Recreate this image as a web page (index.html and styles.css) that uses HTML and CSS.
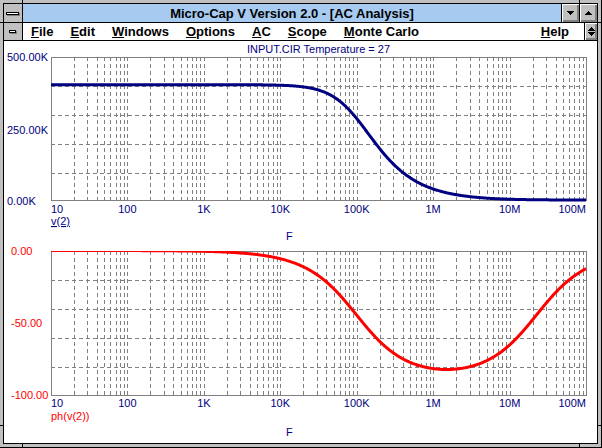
FILE: index.html
```html
<!DOCTYPE html>
<html lang="en">
<head>
<meta charset="utf-8">
<title>Micro-Cap V Version 2.0 - [AC Analysis]</title>
<link rel="stylesheet" href="styles.css">
</head>
<body>
<div class="window">
  <div class="frame">
    <div class="titlebar">
      <div class="sysbox"><span class="sysbar"></span></div>
      <div class="caption">Micro-Cap V Version 2.0 - [AC Analysis]</div>
      <div class="btn"><svg class="glyph" width="7" height="4" viewBox="0 0 7 4"><path d="M0 0H7V1H6V2H5V3H4V4H3V3H2V2H1V1H0Z"/></svg></div>
      <div class="btn"><svg class="glyph" width="7" height="4" viewBox="0 0 7 4"><path d="M3 0H4V1H5V2H6V3H7V4H0V3H1V2H2V1H3Z"/></svg></div>
    </div>
    <div class="menubar">
      <div class="sysbox"><span class="sysbar small"></span></div>
      <nav class="menus">
        <span class="menu"><u>F</u>ile</span>
        <span class="menu"><u>E</u>dit</span>
        <span class="menu"><u>W</u>indows</span>
        <span class="menu"><u>O</u>ptions</span>
        <span class="menu"><u>A</u>C</span>
        <span class="menu"><u>S</u>cope</span>
        <span class="menu"><u>M</u>onte Carlo</span>
      </nav>
      <span class="menu help"><u>H</u>elp</span>
      <div class="btn restore"><svg class="glyph" width="7" height="9" viewBox="0 0 7 9"><path d="M3 0H4V1H5V2H6V3H7V4H0V3H1V2H2V1H3Z"/><path d="M0 5H7V6H6V7H5V8H4V9H3V8H2V7H1V6H0Z"/></svg></div>
    </div>
    <div class="client">
      <svg class="plots" width="593" height="402" viewBox="4 41 593 402">
        <defs>
          <clipPath id="clip1"><rect x="51" y="57" width="536" height="145"/></clipPath>
          <clipPath id="clip2"><rect x="51" y="251" width="536" height="146"/></clipPath>
        </defs>
        <text class="t navy" x="318.5" y="53" text-anchor="middle">INPUT.CIR Temperature = 27</text>

        <g id="grid1" class="grid"></g>
        <path class="border" d="M51.5 57.5H586.5V200.5H51.5Z"/>
        <path id="curve1" class="curve navy-stroke" clip-path="url(#clip1)" d=""/>
        <text class="t navy" x="7" y="61">500.00K</text>
        <text class="t navy" x="7" y="134">250.00K</text>
        <text class="t navy" x="7" y="205">0.00K</text>
        <g class="t navy xl1">
          <text x="51" y="213">10</text>
          <text x="127.4" y="213" text-anchor="middle">100</text>
          <text x="203.9" y="213" text-anchor="middle">1K</text>
          <text x="280.3" y="213" text-anchor="middle">10K</text>
          <text x="356.7" y="213" text-anchor="middle">100K</text>
          <text x="433.1" y="213" text-anchor="middle">1M</text>
          <text x="509.6" y="213" text-anchor="middle">10M</text>
          <text x="586" y="213" text-anchor="end">100M</text>
        </g>
        <text class="t navy under" x="51" y="225">v(2)</text>
        <text class="t navy" x="286" y="240">F</text>

        <g id="grid2" class="grid"></g>
        <path class="border" d="M51.5 251.5H586.5V395.5H51.5Z"/>
        <path id="curve2" class="curve red-stroke" clip-path="url(#clip2)" d=""/>
        <text class="t red" x="11" y="255">0.00</text>
        <text class="t red" x="11" y="327">-50.00</text>
        <text class="t red" x="11" y="399">-100.00</text>
        <g class="t navy">
          <text x="51" y="407">10</text>
          <text x="127.4" y="407" text-anchor="middle">100</text>
          <text x="203.9" y="407" text-anchor="middle">1K</text>
          <text x="280.3" y="407" text-anchor="middle">10K</text>
          <text x="356.7" y="407" text-anchor="middle">100K</text>
          <text x="433.1" y="407" text-anchor="middle">1M</text>
          <text x="509.6" y="407" text-anchor="middle">10M</text>
          <text x="586" y="407" text-anchor="end">100M</text>
        </g>
        <text class="t red" x="51" y="420">ph(v(2))</text>
        <text class="t navy" x="286" y="436">F</text>
      </svg>
    </div>
  </div>
  <i class="notch v n-tl"></i>
  <i class="notch v n-tr"></i>
  <i class="notch v n-bl"></i>
  <i class="notch v n-br"></i>
  <i class="notch h n-lt"></i>
  <i class="notch h n-lb"></i>
  <i class="notch h n-rt"></i>
  <i class="notch h n-rb"></i>
</div>
<script src="script.js"></script>
</body>
</html>
```

FILE: styles.css
```css
html, body {
  margin: 0;
  padding: 0;
  background: #c0c0c0;
}

body {
  font-family: "Liberation Sans", Arial, sans-serif;
}

.window {
  position: relative;
  box-sizing: border-box;
  width: 602px;
  height: 448px;
  padding: 3px;
  background: #c0c0c0;
  border-right: 1px solid #000;
  border-bottom: 1px solid #000;
}

.frame {
  box-sizing: border-box;
  height: 100%;
  border: 1px solid #000;
  display: flex;
  flex-direction: column;
}

.titlebar {
  display: flex;
  height: 18px;
  border-bottom: 1px solid #000;
  flex: none;
}

.menubar {
  display: flex;
  height: 17px;
  border-bottom: 1px solid #000;
  background: #fff;
  flex: none;
}

.sysbox {
  width: 18px;
  flex: none;
  background: #c0c0c0;
  border-right: 1px solid #000;
  display: flex;
  align-items: center;
  justify-content: center;
}

.sysbar {
  display: block;
  width: 11px;
  height: 1px;
  background: #fff;
  border: 1px solid #000;
  box-shadow: 1px 1px 0 #808080;
  margin: 0 1px 0 0;
}

.sysbar.small {
  width: 5px;
  margin: 0 1px 1px 0;
}

.caption {
  flex: 1;
  background: #a6caf0;
  color: #000;
  font-weight: bold;
  font-size: 13px;
  line-height: 18px;
  padding-top: 1px;
  box-sizing: border-box;
  text-align: center;
  white-space: nowrap;
  overflow: hidden;
}

.btn {
  flex: none;
  width: 17px;
  border-left: 1px solid #000;
  background: #c0c0c0;
  box-shadow: inset 1px 1px 0 #fff, inset -2px -2px 0 #808080;
  display: flex;
  align-items: center;
  justify-content: center;
}

.btn.restore {
  width: 12px;
}

.glyph {
  display: block;
  fill: #000;
  shape-rendering: crispEdges;
}

.menus {
  display: flex;
  gap: 17px;
  padding-left: 8px;
}

.menu {
  font-weight: bold;
  font-size: 13px;
  line-height: 17px;
  color: #000;
  white-space: nowrap;
}

.menu u {
  text-decoration: underline;
  text-underline-offset: 1px;
}

.help {
  margin-left: auto;
  margin-right: 15px;
}

.client {
  flex: 1;
  background: #fff;
  overflow: hidden;
}

.plots {
  display: block;
}

.t {
  font-family: "Liberation Sans", Arial, sans-serif;
  font-size: 11px;
}

.navy {
  fill: #000080;
}

.red {
  fill: #ff0000;
}

.under {
  text-decoration: underline;
}

.grid path {
  fill: none;
  stroke: #808080;
  stroke-width: 1;
  stroke-dasharray: 4 3;
  shape-rendering: crispEdges;
}

.border {
  fill: none;
  stroke: #808080;
  stroke-width: 1;
  shape-rendering: crispEdges;
}

.curve {
  fill: none;
  stroke-width: 3;
  stroke-linejoin: round;
  stroke-linecap: butt;
}

.navy-stroke {
  stroke: #000080;
}

.red-stroke {
  stroke: #ff0000;
}

.notch {
  position: absolute;
  background: #000;
  display: block;
}

.notch.v {
  width: 1px;
  height: 3px;
}

.notch.h {
  width: 3px;
  height: 1px;
}

.n-tl { left: 22px; top: 0; }
.n-tr { left: 579px; top: 0; }
.n-bl { left: 22px; top: 444px; }
.n-br { left: 579px; top: 444px; }
.n-lt { left: 0; top: 22px; }
.n-lb { left: 0; top: 425px; }
.n-rt { left: 598px; top: 22px; }
.n-rb { left: 598px; top: 425px; }
```

FILE: script.js
```js
(function () {
  var X0 = 51, X1 = 586, D = (X1 - X0) / 7;

  function gridPath(top, bottom, rows) {
    var d = '';
    for (var dec = 1; dec <= 7; dec++) {
      for (var m = 2; m <= 10; m++) {
        if (dec === 7 && m === 10) continue;
        var x = Math.round(X0 + (dec - 1 + Math.log10(m)) * D) + 0.5;
        d += 'M' + x + ' ' + top + 'V' + (bottom + 1);
      }
    }
    for (var i = 0; i < rows.length; i++) {
      d += 'M' + X0 + ' ' + (rows[i] + 0.5) + 'H' + (X1 + 1);
    }
    return d;
  }

  function addGrid(id, top, bottom, rows) {
    var g = document.getElementById(id);
    var p = document.createElementNS('http://www.w3.org/2000/svg', 'path');
    p.setAttribute('d', gridPath(top, bottom, rows));
    g.appendChild(p);
  }

  addGrid('grid1', 57, 200, [86, 115, 144, 173]);
  addGrid('grid2', 251, 395, [280, 309, 338, 367]);

  var fp = 100e3, fz = 22.4e6, K = 405e3;
  var N = 700;
  var d1 = '', d2 = '';
  for (var i = 0; i <= N; i++) {
    var lf = 1 + 7 * i / N;
    var f = Math.pow(10, lf);
    var x = X0 + (lf - 1) * D;
    var mag = K * Math.sqrt(1 + Math.pow(f / fz, 2)) / Math.sqrt(1 + Math.pow(f / fp, 2));
    var y1 = 200.5 - mag / 500e3 * 143;
    var ph = (Math.atan(f / fz) - Math.atan(f / fp)) * 180 / Math.PI;
    var y2 = 250.5 + (-ph) / 100 * 144.5;
    d1 += (i ? 'L' : 'M') + x.toFixed(2) + ' ' + y1.toFixed(2);
    d2 += (i ? 'L' : 'M') + x.toFixed(2) + ' ' + y2.toFixed(2);
  }
  document.getElementById('curve1').setAttribute('d', d1);
  document.getElementById('curve2').setAttribute('d', d2);
})();
```
